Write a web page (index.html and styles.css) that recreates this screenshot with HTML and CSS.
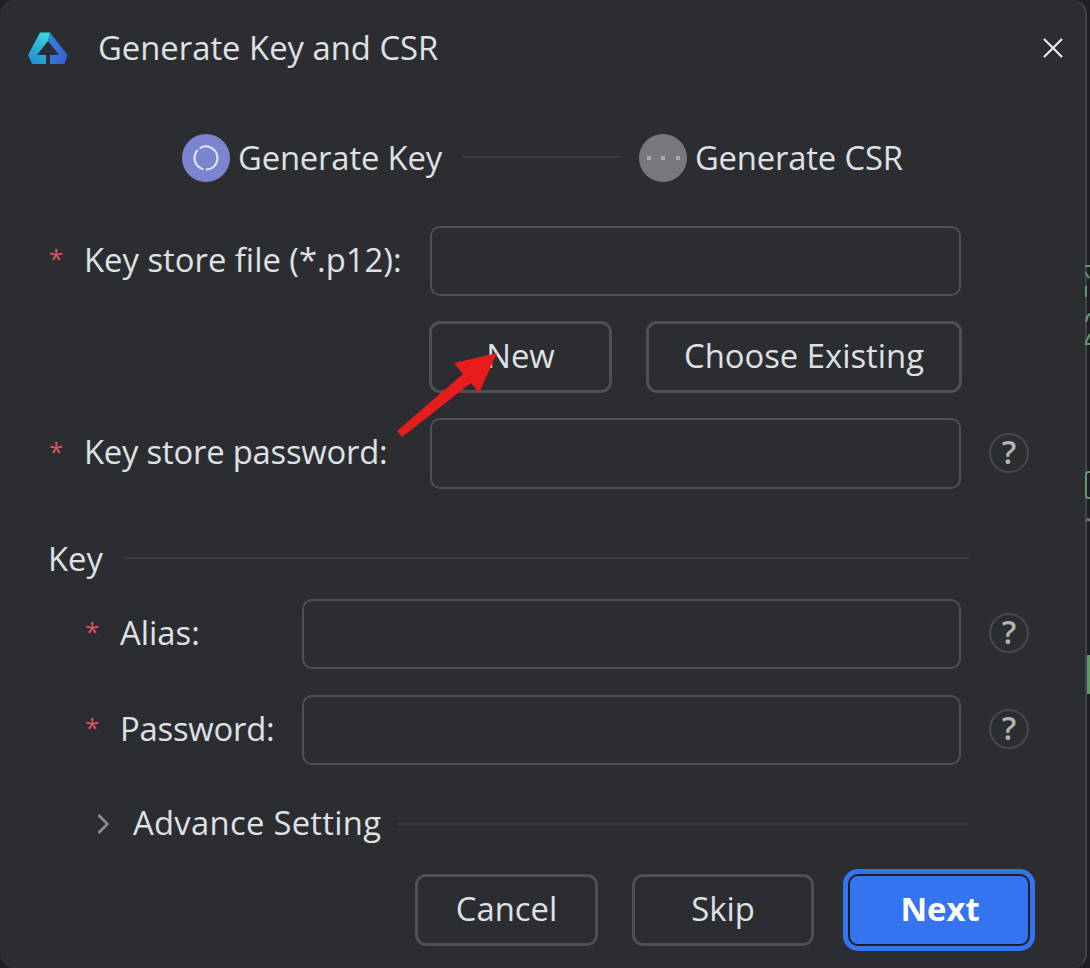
FILE: index.html
```html
<!DOCTYPE html>
<html lang="en">
<head>
<meta charset="utf-8">
<title>Generate Key and CSR</title>
<link rel="stylesheet" href="styles.css">
</head>
<body>
<main class="dialog">
  <header class="titlebar">
    <svg class="logo" width="40" height="33" viewBox="28 32 40 33" aria-hidden="true">
      <defs>
        <linearGradient id="lg1" x1="0.7" y1="0" x2="0.3" y2="1">
          <stop offset="0" stop-color="#3bd3df"/>
          <stop offset="1" stop-color="#1f8fd0"/>
        </linearGradient>
        <linearGradient id="lg2" x1="0" y1="0.3" x2="1" y2="0.8">
          <stop offset="0" stop-color="#2f86d8"/>
          <stop offset="1" stop-color="#3a5fd2"/>
        </linearGradient>
      </defs>
      <path fill="url(#lg2)" d="M50 32.500L67.500 55L64.500 64H50V55H59L48 41Z"/>
      <path fill="url(#lg1)" d="M40 32.500H50L48 41L37 55H46V64H32L28 55Z"/>
    </svg>
    <h1 class="title">Generate Key and CSR</h1>
    <svg class="close" width="20" height="20" viewBox="0 0 20 20" aria-hidden="true">
      <path d="M1 1L19 19M19 1L1 19" stroke="#f2f2f2" stroke-width="2" fill="none"/>
    </svg>
  </header>

  <div class="stepper">
    <svg class="step-icon" width="48" height="48" viewBox="0 0 48 48" aria-hidden="true">
      <circle cx="24" cy="24" r="24" fill="#7b84cf"/>
      <circle cx="24" cy="24" r="11.500" fill="none" stroke="#e4e5f5" stroke-width="2" stroke-dasharray="30 2.500 24 2.500 13 0" transform="rotate(-60 24 24)"/>
    </svg>
    <span class="step-label">Generate Key</span>
    <span class="step-line"></span>
    <svg class="step-icon" width="48" height="48" viewBox="0 0 48 48" aria-hidden="true">
      <circle cx="24" cy="24" r="24" fill="#77787b"/>
      <rect x="8" y="22" width="4" height="4" fill="#a9a9aa"/>
      <rect x="22" y="22" width="4" height="4" fill="#a9a9aa"/>
      <rect x="37" y="22" width="4" height="4" fill="#a9a9aa"/>
    </svg>
    <span class="step-label">Generate CSR</span>
  </div>

  <div class="row row-store">
    <span class="star">*</span>
    <label class="label label-wide">Key store file (*.p12):</label>
    <div class="input"></div>
    <span class="help help-empty"></span>
  </div>

  <div class="file-actions">
    <button class="btn btn-new">New</button>
    <button class="btn btn-choose">Choose Existing</button>
  </div>

  <div class="row row-password">
    <span class="star">*</span>
    <label class="label label-wide label-tight">Key store password:</label>
    <div class="input input-tall"></div>
    <span class="help">?</span>
  </div>

  <div class="section">
    <span class="section-title section-title-key">Key</span>
    <span class="rule rule-key"></span>
  </div>

  <div class="row row-alias indented">
    <span class="star">*</span>
    <label class="label label-narrow">Alias:</label>
    <div class="input"></div>
    <span class="help">?</span>
  </div>

  <div class="row row-key-password indented">
    <span class="star">*</span>
    <label class="label label-narrow label-tight">Password:</label>
    <div class="input"></div>
    <span class="help">?</span>
  </div>

  <div class="advanced">
    <svg class="chevron" width="12" height="20" viewBox="0 0 12 20" aria-hidden="true">
      <path d="M1.500 1L10.500 10L1.500 19" fill="none" stroke="#8e9094" stroke-width="2.500"/>
    </svg>
    <span class="section-title section-title-wide">Advance Setting</span>
    <span class="rule"></span>
  </div>

  <footer class="footer">
    <button class="btn btn-footer">Cancel</button>
    <button class="btn btn-footer btn-skip">Skip</button>
    <button class="btn btn-primary">Next</button>
  </footer>

  <svg class="arrow" width="100" height="84" viewBox="397 353 100 84" aria-hidden="true">
    <polygon fill="#e81c1c" points="397,431 463,374 454,363 497,353 479,393 471,383 402,437"/>
  </svg>
</main>
<svg class="backdrop" width="6" height="450" viewBox="0 0 6 450" aria-hidden="true">
  <g fill="none" stroke="#5f9a68" stroke-width="2">
    <path d="M0 16H5M0 22L4 28M1 36V47"/>
    <path d="M1 72C2 65 5 64 6 64M5 94H0L5 84"/>
    <path d="M6 222H3Q1 222 1 225V245Q1 248 3 248H6"/>
    <path d="M1 271L3 269L5 271" stroke="#777"/>
    <path d="M4 405V444" stroke-width="4"/>
  </g>
</svg>
</body>
</html>
```

FILE: styles.css
```css
* { box-sizing: border-box; }

html, body {
  margin: 0;
  height: 968px;
  overflow: hidden;
  background: #1e1f22;
}

body {
  position: relative;
  font-family: "Open Sans", "Noto Sans", "Liberation Sans", sans-serif;
  font-size: 32.8px;
  line-height: 44px;
  color: #dfe1e5;
}

.backdrop {
  position: absolute;
  left: 1085px;
  top: 250px;
}

.dialog {
  position: relative;
  width: 1087px;
  height: 968px;
  background: #2b2d30;
  border-right: 2px solid #43454a;
  border-radius: 14px;
  padding-left: 50px;
}

.titlebar {
  display: flex;
  align-items: center;
  height: 96px;
  margin-left: -22px;
  padding-right: 22px;
}

.logo { flex: none; }

.title {
  margin: -1px 0 0 30px;
  font-size: 32.8px;
  font-weight: 400;
  flex: 1;
}

.stepper {
  display: flex;
  align-items: center;
  height: 48px;
  margin-top: 38px;
  padding-left: 132px;
}

.step-label {
  margin-left: 8px;
  padding-bottom: 1px;
  letter-spacing: -0.17px;
}

.step-line {
  width: 158px;
  height: 2px;
  background: #3a3c40;
  margin: -2px 19px 0 20px;
}

.row {
  display: flex;
  align-items: center;
  width: 979px;
}

.indented { padding-left: 36px; }

.row-store { margin-top: 44px; }
.row-password { margin-top: 25px; }
.row-alias { margin-top: 21px; }
.row-key-password { margin-top: 26px; }

.star {
  flex: none;
  width: 35px;
  margin-left: -1px;
  color: #d9545c;
  font-size: 26px;
  line-height: 1;
  padding-bottom: 6px;
}

.label {
  flex: none;
  padding-bottom: 3px;
}

.label-wide { width: 346px; }
.label-narrow { width: 182px; }
.label-tight { letter-spacing: -0.22px; }

.input {
  flex: 1;
  height: 70px;
  border: 2px solid #4e5055;
  border-radius: 10px;
}

.input-tall { height: 71px; }

.help {
  flex: none;
  width: 40px;
  height: 40px;
  margin: 0 0 2px 28px;
  border: 2px solid #47494c;
  border-radius: 50%;
  display: flex;
  align-items: center;
  justify-content: center;
  font-size: 32px;
  font-weight: 600;
  color: #b4b5b6;
  padding-bottom: 2px;
}

.help-empty { visibility: hidden; }

.file-actions {
  display: flex;
  gap: 34px;
  margin-top: 25px;
  padding-left: 379px;
}

.btn {
  font: inherit;
  line-height: 44px;
  color: inherit;
  background: transparent;
  border: 3px solid #4e5055;
  border-radius: 11px;
  height: 72px;
  padding: 0 0 3px;
}

.btn-new { width: 183px; }
.btn-choose { width: 316px; }

.section {
  display: flex;
  align-items: center;
  height: 40px;
  margin-top: 49px;
  margin-left: -2px;
  width: 921px;
}

.section-title {
  flex: none;
  padding-bottom: 3px;
}

.section-title-key { padding: 1px 0 0; }
.section-title-wide { letter-spacing: 0.28px; }

.rule {
  flex: 1;
  height: 2px;
  background: #3a3c40;
  margin-left: 17px;
}

.rule-key { margin-left: 21px; }

.advanced {
  display: flex;
  align-items: center;
  height: 40px;
  margin-top: 39px;
  width: 919px;
  padding-left: 47px;
}

.chevron {
  flex: none;
  margin-right: 24px;
}

.footer {
  display: flex;
  align-items: center;
  margin-top: 30px;
  padding-left: 365px;
}

.btn-footer {
  width: 183px;
  margin-right: 34px;
}

.btn-skip {
  width: 182px;
  margin-right: 36px;
}

.btn-primary {
  width: 178px;
  height: 68px;
  border: 0;
  border-radius: 8px;
  background: #3574f0;
  color: #fff;
  font-weight: 700;
  padding-left: 2px;
  box-shadow: 0 0 0 2px #1e1f22, 0 0 0 7px #3574f0;
}

.arrow {
  position: absolute;
  left: 397px;
  top: 353px;
}
```
